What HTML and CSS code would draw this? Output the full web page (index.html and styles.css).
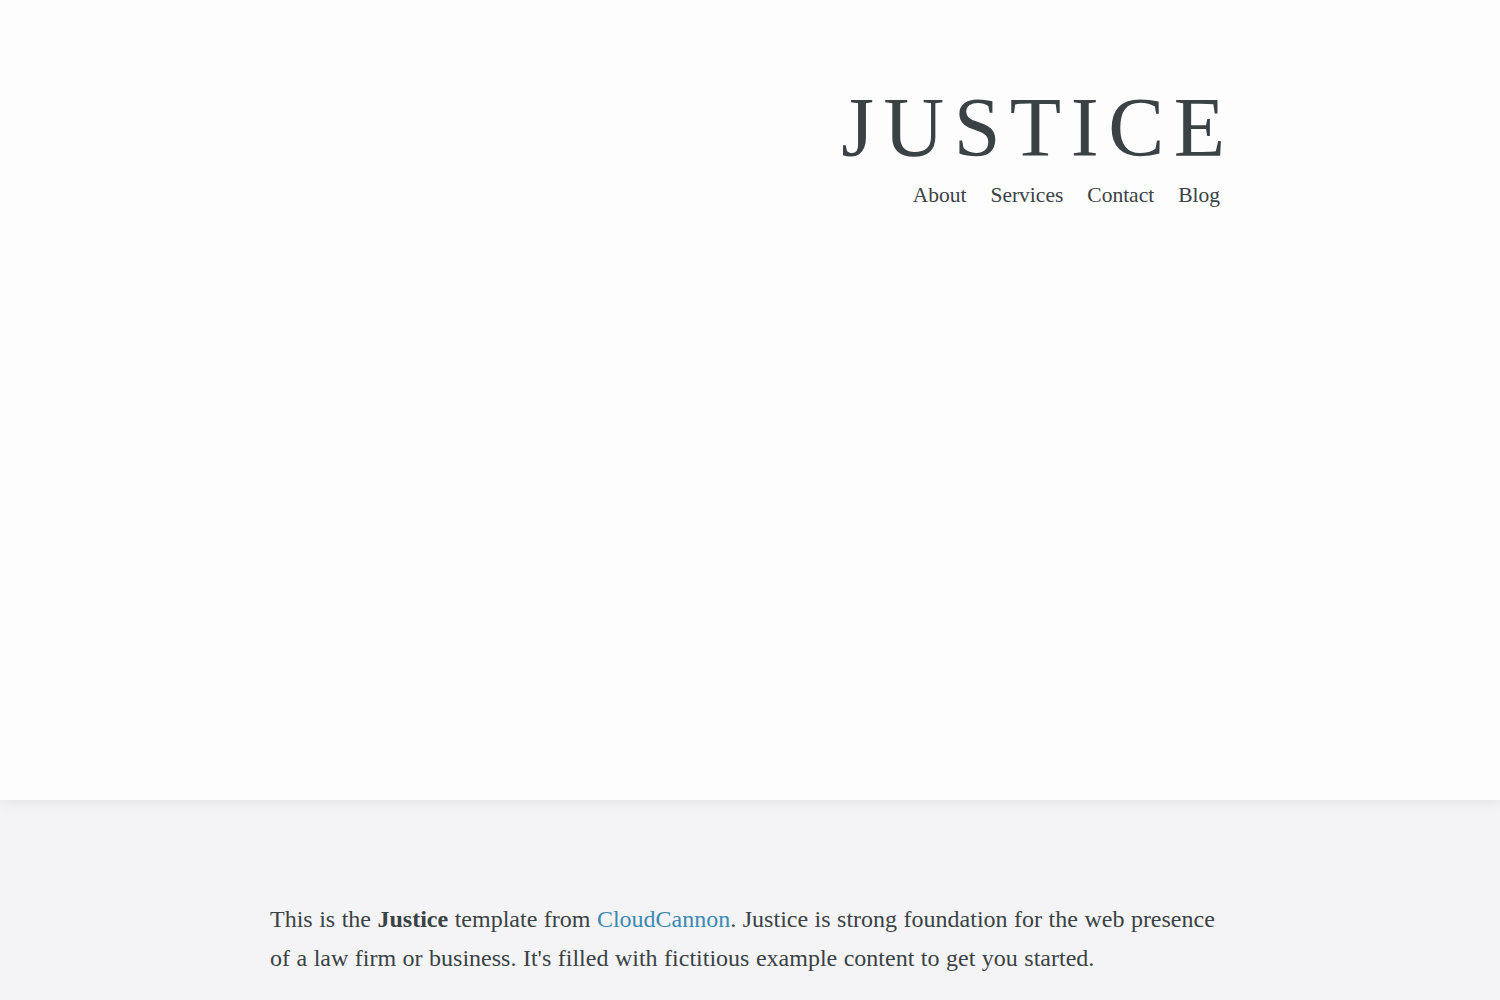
FILE: index.html
```html
<!DOCTYPE html>
<html lang="en">
<head>
<meta charset="utf-8">
<title>Justice</title>
<link rel="stylesheet" href="styles.css">
</head>
<body>
<header class="hero">
  <div class="container header-inner">
    <h1 class="logo">JUSTICE</h1>
    <nav class="nav">
      <a href="#">About</a>
      <a href="#">Services</a>
      <a href="#">Contact</a>
      <a href="#">Blog</a>
    </nav>
  </div>
</header>
<main class="intro">
  <div class="container">
    <p class="lead">This is the <strong>Justice</strong> template from <a href="#">CloudCannon</a>. Justice is strong foundation for the web presence of a law firm or business. It's filled with fictitious example content to get you started.</p>
  </div>
</main>
</body>
</html>
```
FILE: styles.css
```css
html, body {
  margin: 0;
  padding: 0;
}
body {
  font-family: "Liberation Serif", "DejaVu Serif", serif;
  color: #3a4245;
  background: #f4f4f6;
}
.container {
  width: 960px;
  margin: 0 auto;
}
.hero {
  height: 800px;
  background: #fdfdfd;
  box-shadow: 0 2px 14px rgba(0, 0, 0, 0.08);
  position: relative;
  z-index: 1;
}
.header-inner {
  display: flex;
  flex-direction: column;
  align-items: flex-end;
  padding-top: 80px;
}
.logo {
  margin: 0;
  font-weight: normal;
  font-size: 84px;
  line-height: 96px;
  letter-spacing: 9.5px;
  margin-right: -4.5px;
}
.nav {
  display: flex;
  gap: 24px;
  margin-top: 7px;
  margin-right: 10px;
}
.nav a {
  color: #3a4245;
  text-decoration: none;
  font-size: 21.5px;
}
.intro {
  padding-top: 100px;
}
.lead {
  margin: 0;
  font-size: 24px;
  word-spacing: 0.5px;
  line-height: 39px;
}
.lead a {
  color: #3d88b3;
  text-decoration: none;
}
```
